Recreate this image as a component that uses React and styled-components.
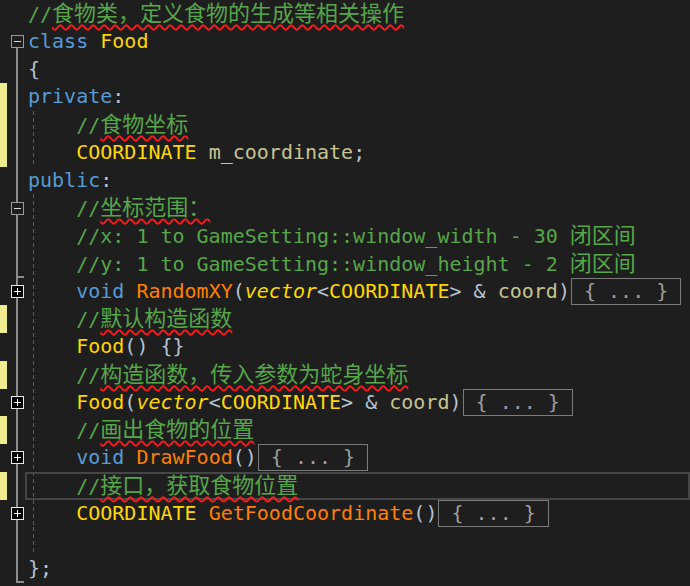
import styled, { createGlobalStyle } from "styled-components"

// colours of the VS dark theme used in the shot
const C = {
  bg: "#1e1e1e",
  comment: "#57a64a",
  kw: "#569cd6",
  type: "#ffd700",
  fn: "#ff8000",
  field: "#c8c38f",
  punct: "#b4c3d2",
  fold: "#8c8c8c",
}

const tokenColor = {
  k: C.kw,
  t: C.type,
  i: C.type,
  f: C.fn,
  v: C.field,
  p: C.punct,
  s: C.punct,
  c: C.comment,
}

// each line: fold kind, change mark, indent guide, tokens
const lines = [
  { fold: "none", code: [["c", "//食物类，定义食物的生成等相关操作"]], wavy: true },
  { fold: "open", code: [["k", "class"], ["s", " "], ["t", "Food"]] },
  { fold: "line", code: [["p", "{"]] },
  { fold: "line", mark: true, code: [["k", "private"], ["p", ":"]] },
  { fold: "line", mark: true, guide: true, code: [["s", "    "], ["c", "//食物坐标"]], wavy: true },
  { fold: "line", mark: true, guide: true, code: [["s", "    "], ["t", "COORDINATE"], ["s", " "], ["v", "m_coordinate"], ["p", ";"]] },
  { fold: "line", code: [["k", "public"], ["p", ":"]] },
  { fold: "minus", guide: true, code: [["s", "    "], ["c", "//坐标范围："]], wavy: true },
  { fold: "line", guide: true, code: [["s", "    "], ["c", "//x: 1 to GameSetting::window_width - 30 闭区间"]] },
  { fold: "tick", guide: true, code: [["s", "    "], ["c", "//y: 1 to GameSetting::window_height - 2 闭区间"]] },
  {
    fold: "plus", guide: true, folded: true,
    code: [["s", "    "], ["k", "void"], ["s", " "], ["f", "RandomXY"], ["p", "("], ["i", "vector"], ["p", "<"], ["t", "COORDINATE"], ["p", ">"], ["s", " & "], ["v", "coord"], ["p", ")"]],
  },
  { fold: "line", mark: true, guide: true, code: [["s", "    "], ["c", "//默认构造函数"]], wavy: true },
  { fold: "line", guide: true, code: [["s", "    "], ["t", "Food"], ["p", "() {}"]] },
  { fold: "line", mark: true, guide: true, code: [["s", "    "], ["c", "//构造函数，传入参数为蛇身坐标"]], wavy: true },
  {
    fold: "plus", guide: true, folded: true,
    code: [["s", "    "], ["t", "Food"], ["p", "("], ["i", "vector"], ["p", "<"], ["t", "COORDINATE"], ["p", ">"], ["s", " & "], ["v", "coord"], ["p", ")"]],
  },
  { fold: "line", mark: true, guide: true, code: [["s", "    "], ["c", "//画出食物的位置"]], wavy: true },
  { fold: "plus", guide: true, folded: true, code: [["s", "    "], ["k", "void"], ["s", " "], ["f", "DrawFood"], ["p", "()"]] },
  { fold: "line", mark: true, guide: true, current: true, code: [["s", "    "], ["c", "//接口，获取食物位置"]], wavy: true },
  { fold: "plus", guide: true, folded: true, code: [["s", "    "], ["t", "COORDINATE"], ["s", " "], ["f", "GetFoodCoordinate"], ["p", "()"]] },
  { fold: "line", guide: true, code: [] },
  { fold: "tick", code: [["p", "};"]] },
]

const CJK = /([\u3000-\u303f\u4e00-\u9fff\uff00-\uffef]+)/

function Comment({ text, wavy }) {
  return text.split(CJK).filter(Boolean).map((part, i) =>
    CJK.test(part)
      ? <Cjk key={i} $wavy={wavy}>{part}</Cjk>
      : <Tok key={i} $c={C.comment}>{part}</Tok>
  )
}

export default function App() {
  return (
    <>
      <Global />
      <Editor>
        {lines.map((line, n) => (
          <Row key={n}>
            <Mark $on={line.mark} />
            <Outline $kind={line.fold}>
              {line.fold === "open" || line.fold === "minus" ? <Fold $open /> : null}
              {line.fold === "plus" ? <Fold /> : null}
            </Outline>
            <Code $guide={line.guide} $current={line.current}>
              {line.code.map(([kind, text], i) =>
                kind === "c"
                  ? <Comment key={i} text={text} wavy={line.wavy} />
                  : <Tok key={i} $c={tokenColor[kind]} $italic={kind === "i"}>{text}</Tok>
              )}
              {line.folded && <Collapsed>{" { ... } "}</Collapsed>}
            </Code>
          </Row>
        ))}
      </Editor>
    </>
  )
}

const Global = createGlobalStyle`
  html, body {
    margin: 0;
    background: ${C.bg};
    overflow: hidden;
  }
`

const Editor = styled.div`
  width: 690px;
  height: 586px;
  background: ${C.bg};
  display: flex;
  flex-direction: column;
  overflow: hidden;
`

const Row = styled.div`
  display: flex;
  height: 27.75px;
  flex: none;
`

const Mark = styled.div`
  width: 7px;
  margin-right: 1px;
  flex: none;
  background: ${p => (p.$on ? "#eeec8c" : "transparent")};
`

const Outline = styled.div`
  position: relative;
  width: 17px;
  flex: none;
  display: flex;
  align-items: center;
  padding-left: 3px;
  box-sizing: border-box;
  &::before {
    content: ${p => (p.$kind === "none" ? "none" : "''")};
    position: absolute;
    left: 8px;
    width: 2px;
    top: ${p => (p.$kind === "open" ? "50%" : "0")};
    bottom: 0;
    background: ${C.fold};
  }
  &::after {
    content: ${p => (p.$kind === "tick" ? "''" : "none")};
    position: absolute;
    left: 8px;
    bottom: 0;
    width: 8px;
    height: 2px;
    background: ${C.fold};
  }
`

const Fold = styled.span`
  position: relative;
  z-index: 1;
  width: 13px;
  height: 13px;
  box-sizing: border-box;
  border: 1px solid ${p => (p.$open ? "#9a9a9a" : "#e8e8e8")};
  background: ${p => (p.$open ? C.bg : "#000")};
  &::before {
    content: '';
    position: absolute;
    left: 2px;
    width: 7px;
    top: 5px;
    height: 1px;
    background: ${p => (p.$open ? "#dcdcdc" : "#fff")};
  }
  &::after {
    content: ${p => (p.$open ? "none" : "''")};
    position: absolute;
    left: 5px;
    width: 1px;
    top: 2px;
    height: 7px;
    background: #fff;
  }
`

const Code = styled.div`
  flex: 1;
  min-width: 0;
  padding-left: 3px;
  white-space: pre;
  font-family: "DejaVu Sans Mono", "Liberation Mono", monospace;
  font-size: 20px;
  line-height: 27.75px;
  color: ${C.punct};
  box-shadow: ${p => (p.$current ? "inset 0 0 0 2px #464646" : "none")};
  background-image: ${p =>
    p.$guide ? "repeating-linear-gradient(to bottom, #5c5c5c 0 4px, transparent 4px 7px)" : "none"};
  background-size: 1px 100%;
  background-position: 8px 0;
  background-repeat: no-repeat;
`

const Tok = styled.span`
  color: ${p => p.$c};
  font-style: ${p => (p.$italic ? "italic" : "normal")};
`

const Cjk = styled.span`
  color: ${C.comment};
  font-family: "Noto Sans CJK SC", sans-serif;
  font-size: 22px;
  line-height: 1;
  text-decoration: ${p => (p.$wavy ? "underline wavy #ff1a1a" : "none")};
  text-decoration-thickness: 1.5px;
  text-decoration-skip-ink: none;
  text-underline-offset: 3px;
`

const Collapsed = styled.span`
  display: inline-block;
  vertical-align: top;
  height: 27px;
  line-height: 25px;
  margin-left: 1px;
  border: 1px solid #7c7c7c;
  box-sizing: border-box;
  color: #9e9e9e;
`
